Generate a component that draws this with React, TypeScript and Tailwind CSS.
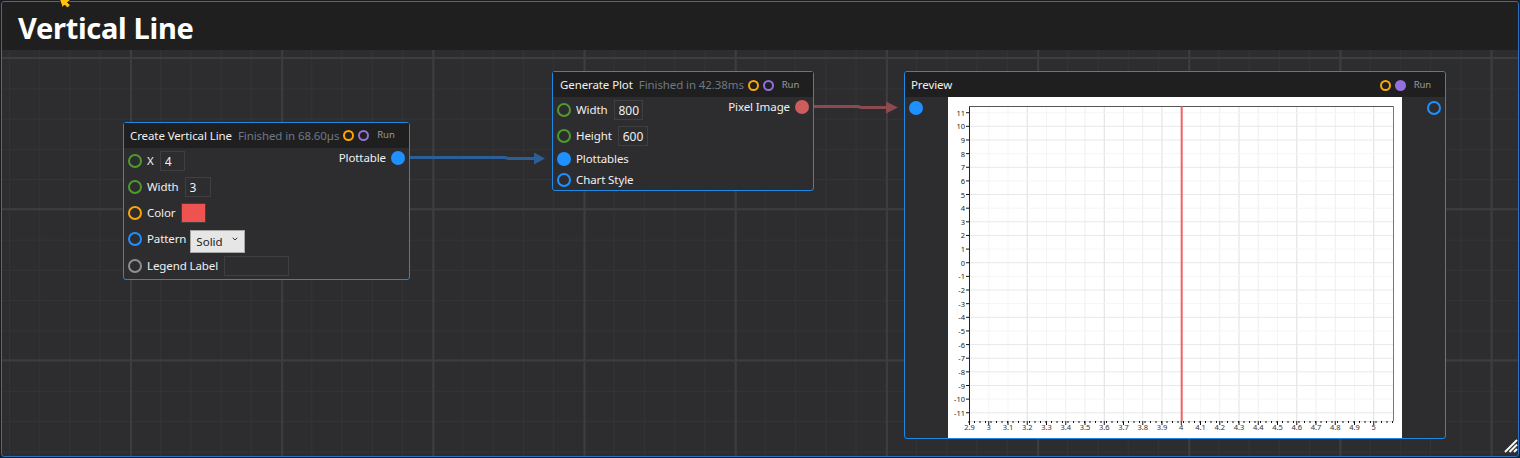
import { ChevronDown } from 'lucide-react';

const XTICKS = ['2.9', '3', '3.1', '3.2', '3.3', '3.4', '3.5', '3.6', '3.7', '3.8', '3.9', '4', '4.1', '4.2', '4.3', '4.4', '4.5', '4.6', '4.7', '4.8', '4.9', '5'];
const DARK_X = ['3.2', '3.6', '3.9', '4.3', '4.6', '5'];
const FAINT_X = ['3', '3.1', '3.3', '4.1', '4.5', '4.9'];
const YTICKS = [11, 10, 9, 8, 7, 6, 5, 4, 3, 2, 1, 0, -1, -2, -3, -4, -5, -6, -7, -8, -9, -10, -11];
const FAINT_Y = [11, 8, 6, 4, 1, -1, -3, -5, -10];

const px = (i: number) => 21.5 + i * 19.25;
const py = (i: number) => 15.7 + i * 13.64;

function Port({ kind }: { kind: 'green' | 'orange' | 'blue' | 'gray' | 'blueFill' | 'red' }) {
    const cls = {
        green: 'border-2 border-[#4f9a2c]',
        orange: 'border-2 border-[#ffa500]',
        blue: 'border-2 border-[#1e90ff]',
        gray: 'border-2 border-[#8f8f8f]',
        blueFill: 'bg-[#1e90ff]',
        red: 'bg-[#cd5c5c]',
    }[kind];
    return <span className={`block w-[14px] h-[14px] rounded-full shrink-0 ${cls}`} />;
}

function HeaderStatus({ purpleFill }: { purpleFill?: boolean }) {
    return (
        <div className="flex items-center">
            <span className="block w-[11px] h-[11px] rounded-full border-2 border-[#ffa500]" />
            <span className={`block w-[11px] h-[11px] rounded-full ml-[4px] ${purpleFill ? 'bg-[#9370db]' : 'border-2 border-[#9370db]'}`} />
            <span className="ml-[8px] text-[9.5px] text-[#9a9a9a]">Run</span>
        </div>
    );
}

function Field({ value, width }: { value: string; width: string }) {
    return (
        <input
            readOnly
            value={value}
            className={`${width} h-[20px] bg-transparent border border-[#3f3f42] pl-[4px] text-[12px] text-[#f0f0f0] outline-none`}
        />
    );
}

function Row({ port, label, height, gap, children }: { port: any; label: string; height: string; gap?: string; children?: React.ReactNode }) {
    return (
        <div className={`flex items-center ${height}`}>
            <Port kind={port} />
            <span className="ml-[5px] text-[11.5px] tracking-[-0.1px] text-[#f0f0f0] whitespace-nowrap">{label}</span>
            <span className={`flex ${gap}`}>{children}</span>
        </div>
    );
}

function Chart() {
    return (
        <svg width="454" height="341" className="block bg-white">
            {XTICKS.map((t, i) => (
                <line key={t} x1={px(i)} x2={px(i)} y1="10" y2="324" stroke={DARK_X.includes(t) ? '#dfdfdf' : FAINT_X.includes(t) ? '#f5f5f5' : '#eeeeee'} />
            ))}
            {YTICKS.map((t, i) => (
                <line key={t} x1="21" x2="446" y1={py(i)} y2={py(i)} stroke={FAINT_Y.includes(t) ? '#f5f5f5' : '#e8e8e8'} />
            ))}
            <rect x="21.5" y="9.5" width="424" height="315" fill="none" stroke="#e0e0e0" />
            <line x1="21.5" x2="445.5" y1="9.5" y2="9.5" stroke="#555555" />
            <line x1="445.5" x2="445.5" y1="9.5" y2="324" stroke="#777777" />
            <line x1="21.5" x2="21.5" y1="9.5" y2="324" stroke="#222222" />
            {Array.from({ length: 78 }).map((_, i) => (
                <line key={i} x1={21 + i * 5.5} x2={21 + i * 5.5} y1="324" y2="326" stroke="#111111" strokeWidth="1" />
            ))}
            {XTICKS.map((t, i) => (
                <g key={t}>
                    <line x1={px(i)} x2={px(i)} y1="324" y2="328" stroke="#111111" />
                    <text x={px(i)} y="333" textAnchor="middle" fontSize="7.5" fill="#333333">{t}</text>
                </g>
            ))}
            {YTICKS.map((t, i) => (
                <g key={t}>
                    <line x1="18" x2="21" y1={py(i)} y2={py(i)} stroke="#111111" />
                    <text x="17" y={py(i) + 3} textAnchor="end" fontSize="7.5" fill="#222222">{t}</text>
                </g>
            ))}
            <line x1="233.7" x2="233.7" y1="9.5" y2="324" stroke="#f06464" strokeWidth="2" />
        </svg>
    );
}

export default function App() {
    return (
        <div className="relative w-[1520px] h-[458px] overflow-hidden bg-[#1c1c1e] pt-px pl-px font-['Noto_Sans',sans-serif]">
            <div className="relative w-[1518px] h-[456px] rounded-[3px] border border-[#2a70bc] overflow-hidden bg-[#2d2d30] bg-[linear-gradient(#3d3d40_2px,transparent_2px),linear-gradient(90deg,#3d3d40_2px,transparent_2px),linear-gradient(#343437_1px,transparent_1px),linear-gradient(90deg,#343437_1px,transparent_1px)] bg-[size:151.2px_151.2px,151.2px_151.2px,30.24px_30.24px,30.24px_30.24px] bg-[position:0_55px,128px_0,0_26px,7px_0]">
                {/* Title */}
                <div className="h-[48px] bg-[#1f1f1f] flex items-center pl-[16px] pt-[2px]">
                    <h1 className="text-[29px] font-bold text-white tracking-[-0.3px] leading-none">Vertical Line</h1>
                </div>

                {/* Wires */}
                <svg className="absolute left-0 top-0 w-full h-full" fill="none">
                    <path d="M403 155.5 H503 L506 156.5 H534" stroke="#2c5f97" strokeWidth="3" />
                    <path d="M532 150.5 L543 156.5 L532 162.5 Z" fill="#2c5f97" />
                    <path d="M806 104.5 H856 L859 105.5 H885" stroke="#8b4a4e" strokeWidth="3" />
                    <path d="M884 99.5 L896 105.5 L884 111.5 Z" fill="#8b4a4e" />
                </svg>

                {/* Create Vertical Line */}
                <div className="absolute left-[121px] top-[120px] w-[287px] h-[158px] rounded-[3px] border border-[#1e88e5] bg-[#2d2d30]">
                    <div className="h-[25px] bg-[#1f1f1f] flex items-center pl-[6px] whitespace-nowrap text-[11.5px] tracking-[-0.1px]">
                        <span className="text-[#f0f0f0]">Create Vertical Line</span>
                        <span className="ml-[6px] mr-[4px] text-[#6f7885]">Finished in 68.60µs</span>
                        <HeaderStatus />
                    </div>
                    <div className="flex justify-between px-[4px]">
                        <div>
                            <Row port="green" label="X" height="h-[26px]" gap="ml-[6px]"><Field value="4" width="w-[25px]" /></Row>
                            <Row port="green" label="Width" height="h-[26px]" gap="ml-[6px]"><Field value="3" width="w-[26px]" /></Row>
                            <Row port="orange" label="Color" height="h-[26px]" gap="ml-[6px]">
                                <span className="block w-[25px] h-[20px] bg-[#ef5350] border border-[#3f3f42]" />
                            </Row>
                            <Row port="blue" label="Pattern" height="h-[26px]" gap="ml-[4px]">
                                <span className="relative block w-[55px] h-[23px]">
                                    <select className="w-full h-full appearance-none bg-[#e6e6e6] border border-[#a8a8a8] pl-[5px] text-[11.5px] text-[#222222] outline-none">
                                        <option>Solid</option>
                                    </select>
                                    <ChevronDown className="absolute right-[6px] top-[7px] w-[8px] h-[8px] text-[#333333]" strokeWidth={3} />
                                </span>
                            </Row>
                            <Row port="gray" label="Legend Label" height="h-[28px]" gap="ml-[6px]"><Field value="" width="w-[65px]" /></Row>
                        </div>
                        <div className="flex items-center h-[14px] mt-[3px]">
                            <span className="mr-[5px] text-[11.5px] tracking-[-0.1px] text-[#f0f0f0]">Plottable</span>
                            <Port kind="blueFill" />
                        </div>
                    </div>
                </div>

                {/* Generate Plot */}
                <div className="absolute left-[550px] top-[69px] w-[262px] h-[120px] rounded-[3px] border border-[#1e88e5] bg-[#2d2d30]">
                    <div className="h-[25px] pt-[1px] bg-[#1f1f1f] flex items-center pl-[7px] whitespace-nowrap text-[11.5px] tracking-[-0.1px]">
                        <span className="text-[#f0f0f0]">Generate Plot</span>
                        <span className="ml-[6px] mr-[4px] text-[#6f7885]">Finished in 42.38ms</span>
                        <HeaderStatus />
                    </div>
                    <div className="flex justify-between px-[4px]">
                        <div>
                            <Row port="green" label="Width" height="h-[26px]" gap="ml-[6px]"><Field value="800" width="w-[29px]" /></Row>
                            <Row port="green" label="Height" height="h-[26px]" gap="ml-[6px]"><Field value="600" width="w-[30px]" /></Row>
                            <Row port="blueFill" label="Plottables" height="h-[20px]" />
                            <Row port="blue" label="Chart Style" height="h-[21px]" />
                        </div>
                        <div className="flex items-center h-[14px] mt-[3px]">
                            <span className="mr-[5px] text-[11.5px] tracking-[-0.1px] text-[#f0f0f0]">Pixel Image</span>
                            <Port kind="red" />
                        </div>
                    </div>
                </div>

                {/* Preview */}
                <div className="absolute left-[902px] top-[69px] w-[542px] h-[368px] rounded-[3px] border border-[#1e88e5] bg-[#2d2d30] overflow-hidden">
                    <div className="h-[25px] pt-[1px] bg-[#1f1f1f] flex items-center justify-between pl-[6px] pr-[14px] text-[11.5px] tracking-[-0.1px]">
                        <span className="text-[#f0f0f0]">Preview</span>
                        <HeaderStatus purpleFill />
                    </div>
                    <div className="flex">
                        <div className="w-[43px] pl-[4px] pt-[4px]"><Port kind="blueFill" /></div>
                        <Chart />
                        <div className="w-[43px] pl-[25px] pt-[4px]"><Port kind="blue" /></div>
                    </div>
                </div>

                {/* Resize grip */}
                <svg className="absolute right-[0px] bottom-[3px]" width="14" height="14" viewBox="0 0 14 14" fill="none">
                    <path d="M1 13 L13 1 M5.5 13 L13 5.5 M10 13 L13 10" stroke="#f5f5f5" strokeWidth="2" />
                </svg>
            </div>

            {/* Cursor */}
            <svg className="absolute left-[58px] top-0" width="14" height="9" viewBox="0 0 14 9">
                <path d="M1 -2 L4.5 8 L6.5 5 L9.5 8 L12.5 5 L9.5 2.5 L12 0.5 L10 -2 Z" fill="#ffc20e" stroke="#1a1a1a" strokeWidth="1" />
            </svg>
        </div>
    );
}
